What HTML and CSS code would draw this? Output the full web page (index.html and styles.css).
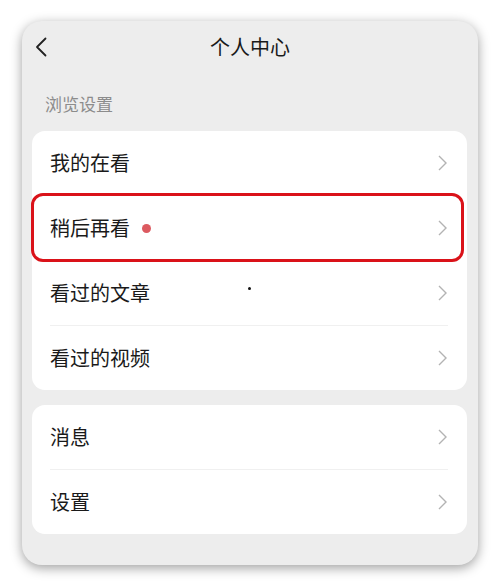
FILE: index.html
```html
<!DOCTYPE html>
<html lang="zh-CN">
<head>
<meta charset="utf-8">
<title>个人中心</title>
<link rel="stylesheet" href="styles.css">
</head>
<body>
<div class="phone">
  <header class="topbar">
    <svg class="back" width="12" height="20" viewBox="0 0 12 20"><path d="M10.5 1.5 L2 10 L10.5 18.5" fill="none" stroke="#222" stroke-width="1.8" stroke-linecap="round" stroke-linejoin="round"/></svg>
    <h1 class="title">个人中心</h1>
  </header>
  <div class="section-label">浏览设置</div>
  <div class="card">
    <div class="row"><span class="label">我的在看</span><svg class="chev" width="9" height="16" viewBox="0 0 9 16"><path d="M1 1 L8 8 L1 15" fill="none" stroke="#b3b3b3" stroke-width="1.4"/></svg></div>
    <div class="sep"></div>
    <div class="row"><span class="label">稍后再看</span><span class="dot"></span><svg class="chev" width="9" height="16" viewBox="0 0 9 16"><path d="M1 1 L8 8 L1 15" fill="none" stroke="#b3b3b3" stroke-width="1.4"/></svg></div>
    <div class="sep"></div>
    <div class="row"><span class="label">看过的文章</span><svg class="chev" width="9" height="16" viewBox="0 0 9 16"><path d="M1 1 L8 8 L1 15" fill="none" stroke="#b3b3b3" stroke-width="1.4"/></svg></div>
    <div class="sep"></div>
    <div class="row"><span class="label">看过的视频</span><svg class="chev" width="9" height="16" viewBox="0 0 9 16"><path d="M1 1 L8 8 L1 15" fill="none" stroke="#b3b3b3" stroke-width="1.4"/></svg></div>
  </div>
  <div class="card">
    <div class="row"><span class="label">消息</span><svg class="chev" width="9" height="16" viewBox="0 0 9 16"><path d="M1 1 L8 8 L1 15" fill="none" stroke="#b3b3b3" stroke-width="1.4"/></svg></div>
    <div class="sep"></div>
    <div class="row"><span class="label">设置</span><svg class="chev" width="9" height="16" viewBox="0 0 9 16"><path d="M1 1 L8 8 L1 15" fill="none" stroke="#b3b3b3" stroke-width="1.4"/></svg></div>
  </div>
  <div class="highlight"></div>
  <div class="speck"></div>
</div>
</body>
</html>
```
FILE: styles.css
```css
html, body {
  margin: 0;
  padding: 0;
  background: #ffffff;
}
body {
  width: 499px;
  height: 587px;
  overflow: hidden;
  font-family: "Noto Sans CJK SC", "Noto Sans", sans-serif;
}
.phone {
  position: relative;
  margin: 21px 0 0 22px;
  width: 456px;
  height: 544px;
  box-sizing: border-box;
  background: #ededed;
  border-radius: 20px;
  box-shadow: 0 3px 12px rgba(0, 0, 0, 0.38);
  padding: 0 10px;
}
.topbar {
  height: 52px;
  display: flex;
  align-items: center;
  justify-content: center;
  position: relative;
}
.back {
  position: absolute;
  left: 3px;
  top: 16px;
}
.title {
  margin: 0;
  font-size: 20px;
  font-weight: 400;
  color: #1a1a1a;
  line-height: 1;
}
.section-label {
  height: 58px;
  box-sizing: border-box;
  padding: 19px 0 0 13px;
  font-size: 17px;
  color: #8c8c8c;
  line-height: 24px;
}
.card {
  background: #ffffff;
  border-radius: 13px;
  margin-bottom: 15px;
  width: 435px;
}
.row {
  height: 64px;
  display: flex;
  align-items: center;
  padding: 0 20px 0 18px;
}
.label {
  font-size: 20px;
  color: #1a1a1a;
  line-height: 1;
  margin-top: 0;
}
.dot {
  width: 9px;
  height: 9px;
  border-radius: 50%;
  background: #dc5a60;
  margin-left: 12px;
}
.chev {
  margin-left: auto;
}
.sep {
  height: 1px;
  background: #f0f0f0;
  margin: 0 19px 0 18px;
}
.highlight {
  position: absolute;
  left: 9px;
  top: 172px;
  width: 433px;
  height: 69px;
  box-sizing: border-box;
  border: 3px solid #da1219;
  border-radius: 12px;
}
.speck {
  position: absolute;
  left: 226px;
  top: 266px;
  width: 3px;
  height: 3px;
  border-radius: 50%;
  background: #111;
}
```
